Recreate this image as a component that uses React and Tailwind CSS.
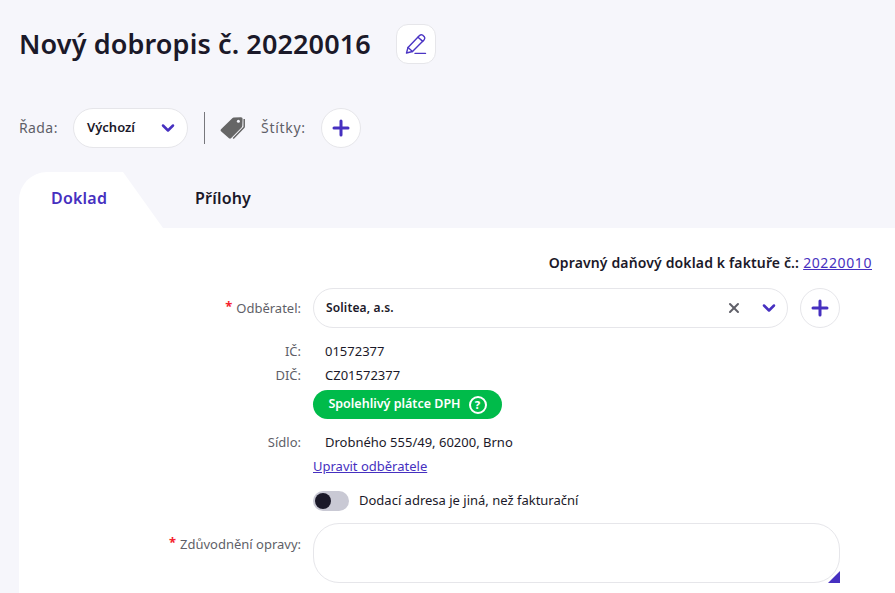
import React from 'react';
import { ChevronDown, Plus, X } from 'lucide-react';

const font = 'font-["Noto_Sans",sans-serif]';

const PenIcon = () => (
  <svg width="22" height="22" viewBox="0 0 22 22" fill="none" stroke="#4b35c4" strokeWidth="1.4" strokeLinejoin="round" strokeLinecap="round">
    <path d="M1.5 20 L3 14.5 L14.5 2.5 Q16 1.2 17.5 2 L19.3 3.8 Q20.4 5.2 19.2 6.7 L7.5 18.5 Z" />
    <path d="M3 14.5 L7.5 18.5" />
    <path d="M13 4.2 L17.8 8.4" />
    <path d="M10 20.4 H20.5" />
  </svg>
);

const TagsIcon = () => (
  <svg width="26" height="24" viewBox="0 0 26 24">
    <path d="M1 13.2 L12.3 2.2 Q12.9 1.6 13.8 1.6 L21 1.2 Q22.6 1.2 22.6 2.8 L22.3 9.8 Q22.3 10.7 21.6 11.4 L11 22.3 Q10 23.2 9 22.3 L1 15.2 Q0 14.2 1 13.2 Z" fill="#666666" />
    <circle cx="18.4" cy="5.2" r="1.5" fill="#f6f6fb" />
    <path d="M24.2 3 L24.2 10.4 Q24.2 11.2 23.6 11.8 L13.2 22.6" fill="none" stroke="#666666" strokeWidth="1.5" />
  </svg>
);

const RoundPlus = () => (
  <button className="flex h-10 w-10 shrink-0 items-center justify-center rounded-full border border-[#e6e6ea] bg-white">
    <Plus size={24} strokeWidth={3} className="text-[#4630c0]" />
  </button>
);

const Label = ({ required, children }) => (
  <div className="w-[282px] shrink-0 text-right text-[13px] text-[#5f5f68]">
    {required && <span className="mr-1 align-[2px] font-bold text-[#f5222d]">*</span>}
    {children}
  </div>
);

const InfoRow = ({ label, children, className }) => (
  <div className={`flex items-center ${className}`}>
    <Label>{label}</Label>
    <div className="ml-6 text-[13px] text-[#1b1929]">{children}</div>
  </div>
);

export default function App() {
  return (
    <div className={`${font} h-[593px] overflow-hidden bg-[#f6f6fb] pt-6 pl-[19px]`}>
      <div className="flex h-10 items-center">
        <h1 className="text-[27px] font-semibold tracking-[0.12px] text-[#1b1929]">Nový dobropis č. 20220016</h1>
        <button className="ml-[25px] flex h-10 w-10 items-center justify-center rounded-xl border border-[#e6e6ea] bg-white">
          <PenIcon />
        </button>
      </div>

      <div className="mt-11 flex h-10 items-center">
        <span className="w-[39px] text-sm tracking-[0.4px] whitespace-nowrap text-[#5f5f68]">Řada:</span>
        <div className="ml-[15px] flex h-10 w-[115px] items-center justify-between rounded-full border border-[#e6e6ea] bg-white pr-[9px] pl-[13px]">
          <span className="text-[13px] font-semibold text-[#1b1929]">Výchozí</span>
          <ChevronDown size={20} strokeWidth={3} className="text-[#4630c0]" />
        </div>
        <div className="ml-4 h-8 w-px bg-[#77777c]" />
        <div className="ml-[15px]">
          <TagsIcon />
        </div>
        <span className="ml-[15px] w-[44px] text-sm tracking-[0.7px] whitespace-nowrap text-[#5f5f68]">Štítky:</span>
        <div className="ml-4">
          <RoundPlus />
        </div>
      </div>

      <div className="mt-6 flex h-14 items-center">
        <div className="flex h-14 w-[144px] items-center rounded-tl-[28px] bg-white pb-1 pl-8 text-base font-semibold tracking-[0.2px] text-[#4630c0] [clip-path:polygon(0_0,104px_0,144px_100%,0_100%)]">
          Doklad
        </div>
        <div className="ml-8 pb-1 text-base font-semibold tracking-[0.2px] text-[#1b1929]">Přílohy</div>
      </div>

      <div className="h-[400px] bg-white">
        <div className="flex h-[44px] items-center justify-end pt-[26px] pr-[23px] text-sm leading-[18px] font-semibold tracking-[0.14px] text-[#1b1929]">
          Opravný daňový doklad k faktuře č.:
          <a href="#" className="ml-1 text-sm font-normal tracking-[0.6px] text-[#4630c0] underline">20220010</a>
        </div>

        <div className="mt-4 flex items-center">
          <Label required>Odběratel:</Label>
          <div className="ml-3 flex h-10 w-[475px] items-center rounded-full border border-[#e6e6ea] pr-[8px] pl-3">
            <span className="text-xs font-semibold tracking-[0.15px] text-[#1b1929]">Solitea, a.s.</span>
            <X size={16} strokeWidth={3} className="ml-auto text-[#5f5f68]" />
            <ChevronDown size={20} strokeWidth={3} className="ml-[17px] text-[#4630c0]" />
          </div>
          <div className="ml-3">
            <RoundPlus />
          </div>
        </div>

        <InfoRow label="IČ:" className="mt-[14px] h-[20px]">01572377</InfoRow>
        <InfoRow label="DIČ:" className="mt-1 h-[20px]">CZ01572377</InfoRow>

        <div className="mt-1 ml-[294px] flex h-[29px] w-[189px] items-center justify-center gap-[8px] rounded-full bg-[#00bb4a] text-[12.5px] font-semibold text-white">
          Spolehlivý plátce DPH
          <span className="flex h-[18px] w-[18px] items-center justify-center rounded-full border-2 border-white text-[11px] leading-none font-extrabold">?</span>
        </div>

        <InfoRow label="Sídlo:" className="mt-[14px] h-[20px]">Drobného 555/49, 60200, Brno</InfoRow>

        <a href="#" className="mt-[3px] ml-[294px] block text-[13px] leading-5 text-[#4630c0] underline">Upravit odběratele</a>

        <div className="mt-[15px] ml-[294px] flex items-center">
          <div className="flex h-5 w-9 items-center rounded-full bg-[#c9c9d4] pl-[2px]">
            <div className="h-4 w-4 rounded-full bg-[#1b1929]" />
          </div>
          <span className="ml-[10px] text-[13px] text-[#1b1929]">Dodací adresa je jiná, než fakturační</span>
        </div>

        <div className="mt-3 flex">
          <div className="pt-[10px]">
            <Label required>Zdůvodnění opravy:</Label>
          </div>
          <div className="relative ml-3 h-[60px] w-[527px] rounded-[26px] border border-[#e6e6ea]">
            <div className="absolute -right-px -bottom-px h-3 w-3 bg-[#4630c0] [clip-path:polygon(100%_0,100%_100%,0_100%)]" />
          </div>
        </div>
      </div>
    </div>
  );
}
